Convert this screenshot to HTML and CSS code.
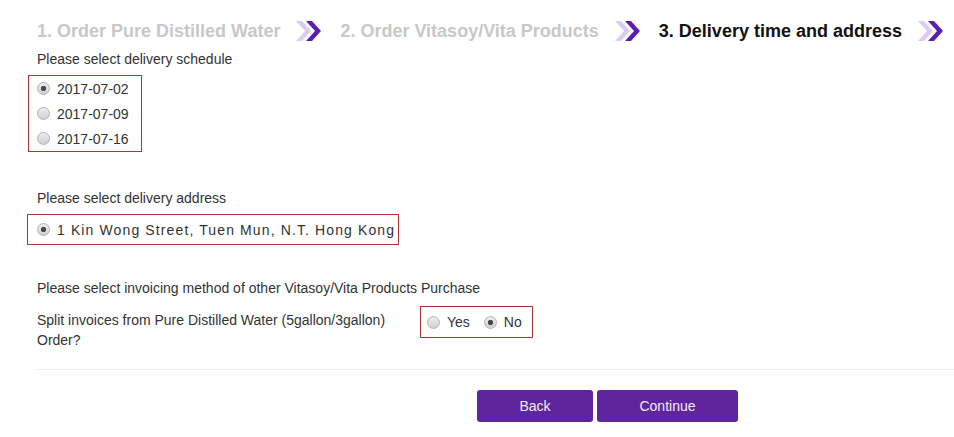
FILE: index.html
```html
<!DOCTYPE html>
<html lang="en">

<head>
    <meta charset="UTF-8">
    <meta name="viewport" content="width=device-width, initial-scale=1.0">
    <title>Delivery time and address</title>
    <link rel="stylesheet" href="styles.css">
</head>

<body>
    <div class="steps">
        <span class="step">1. Order Pure Distilled Water</span>
        <svg class="chevron" width="25" height="20" viewBox="0 0 25 20">
            <polygon points="0,0 6,0 15,10 6,20 0,20 9,10" fill="#dccdf0" />
            <polygon points="10,0 16,0 25,10 16,20 10,20 19,10" fill="#5a1fb0" />
        </svg>
        <span class="step">2. Order Vitasoy/Vita Products</span>
        <svg class="chevron" width="25" height="20" viewBox="0 0 25 20">
            <polygon points="0,0 6,0 15,10 6,20 0,20 9,10" fill="#dccdf0" />
            <polygon points="10,0 16,0 25,10 16,20 10,20 19,10" fill="#5a1fb0" />
        </svg>
        <span class="step current">3. Delivery time and address</span>
        <svg class="chevron" width="25" height="20" viewBox="0 0 25 20">
            <polygon points="0,0 6,0 15,10 6,20 0,20 9,10" fill="#dccdf0" />
            <polygon points="10,0 16,0 25,10 16,20 10,20 19,10" fill="#5a1fb0" />
        </svg>
    </div>

    <form class="page">
        <p class="label">Please select delivery schedule</p>
        <div class="choice-box schedule">
            <label class="option"><input type="radio" name="date" checked> 2017-07-02</label>
            <label class="option"><input type="radio" name="date"> 2017-07-09</label>
            <label class="option"><input type="radio" name="date"> 2017-07-16</label>
        </div>

        <p class="label second">Please select delivery address</p>
        <div class="choice-box address">
            <label class="option"><input type="radio" name="address" checked> 1 Kin Wong Street, Tuen Mun, N.T. Hong Kong</label>
        </div>

        <p class="label third">Please select invoicing method of other Vitasoy/Vita Products Purchase</p>
        <div class="split-row">
            <p class="split-text">Split invoices from Pure Distilled Water (5gallon/3gallon) Order?</p>
            <div class="choice-box inline">
                <label class="option"><input type="radio" name="split"> Yes</label>
                <label class="option"><input type="radio" name="split" checked> No</label>
            </div>
        </div>

        <hr class="divider">

        <div class="actions">
            <button type="button" class="btn back">Back</button>
            <button type="button" class="btn next">Continue</button>
        </div>
    </form>
</body>

</html>
```

FILE: styles.css
```css
body {
    font-family: "Liberation Sans", Arial, sans-serif;
    font-size: 14px;
    color: #333;
    background-color: #fff;
    margin: 0;
    overflow: hidden;
}

.steps {
    display: flex;
    align-items: center;
    padding: 21px 0 0 37px;
    height: 20px;
    white-space: nowrap;
}

.step {
    font-size: 18px;
    font-weight: bold;
    line-height: 20px;
    color: #c8c8c8;
}

.step.current {
    color: #111;
}

.chevron {
    margin: 0 19px 0 16px;
    flex-shrink: 0;
}

.page {
    padding-left: 37px;
}

.label {
    margin: 8px 0 0;
    line-height: 20px;
}

.label.second {
    margin-top: 36px;
}

.label.third {
    margin-top: 33px;
}

.choice-box {
    border: 1px solid #b03333;
    display: inline-block;
    vertical-align: top;
}

.schedule {
    margin: 6px 0 0 -9px;
    padding: 0 12px 0 8px;
}

.schedule .option {
    display: flex;
    align-items: center;
    height: 25px;
}

.address {
    margin: 6px 0 0 -10px;
    padding: 0 3px 0 9px;
}

.address .option {
    display: flex;
    align-items: center;
    height: 29px;
    letter-spacing: 1.12px;
}

.split-row {
    display: flex;
    align-items: flex-start;
    margin-top: 8px;
}

.split-text {
    width: 370px;
    margin: 4px 13px 0 0;
    line-height: 20px;
}

.inline {
    display: flex;
    height: 30px;
    padding: 0 10px 0 6px;
}

.inline .option {
    display: flex;
    align-items: center;
    margin-right: 14px;
}

.inline .option:last-child {
    margin-right: 0;
}

input[type="radio"] {
    appearance: none;
    -webkit-appearance: none;
    width: 13px;
    height: 13px;
    margin: 0 7px 0 0;
    border: 1px solid #b4b4b4;
    border-radius: 50%;
    box-sizing: border-box;
    background: linear-gradient(#ececec, #d0d0d0);
}

input[type="radio"]:checked {
    background: radial-gradient(circle, #4a4a4a 0 2.3px, transparent 3px), linear-gradient(#ececec, #d0d0d0);
}

.divider {
    border: none;
    border-top: 1px solid #ececec;
    margin: 19px 0 0;
}

.actions {
    display: flex;
    gap: 4px;
    margin-top: 20px;
    padding-left: 440px;
}

.btn {
    font-family: "Liberation Sans", Arial, sans-serif;
    font-size: 14px;
    color: #f3ecfa;
    background-color: #5f259f;
    border: none;
    border-radius: 3px;
    height: 32px;
    cursor: pointer;
}

.btn.back {
    width: 116px;
}

.btn.next {
    width: 141px;
}
```
